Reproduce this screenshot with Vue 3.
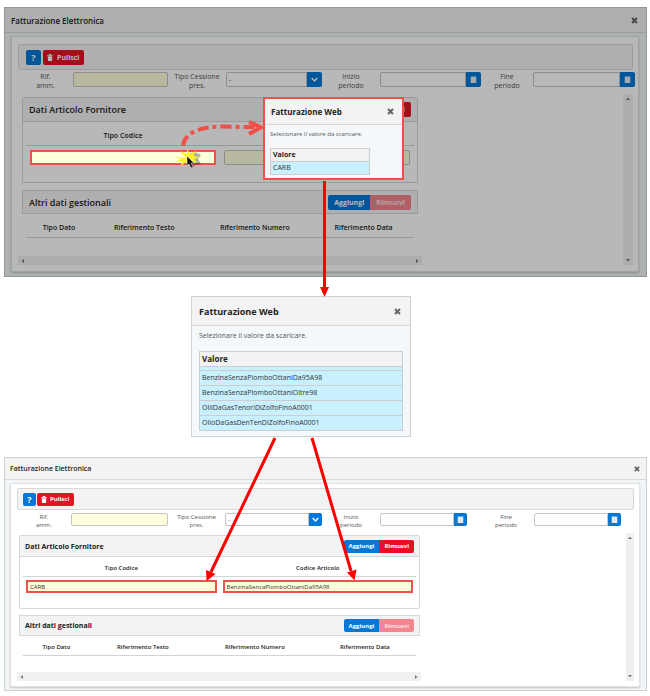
<script setup>
const windows = [
  {
    id: 'before',
    dimmed: true,
    articleColumns: ['Tipo Codice', ''],
    articleValues: ['', ''],
    articleActions: ['', 'Rimuovi'],
  },
  {
    id: 'after',
    dimmed: false,
    articleColumns: ['Tipo Codice', 'Codice Articolo'],
    articleValues: ['CARB', 'BenzinaSenzaPiomboOttaniDa95A98'],
    articleActions: ['Aggiungi', 'Rimuovi'],
  },
]
const managementColumns = ['Tipo Dato', 'Riferimento Testo', 'Riferimento Numero', 'Riferimento Data']
const values = [
  'BenzinaSenzaPiomboOttaniDa95A98',
  'BenzinaSenzaPiomboOttaniOltre98',
  'OliiDaGasTenoriDiZolfoFinoA0001',
  'OlioDaGasDenTenDiZolfoFinoA0001',
]
</script>

<template>
  <main class="page">
    <template v-for="w in windows" :key="w.id">
      <section class="window" :class="w.id">
        <header class="window-head">
          <h1>Fatturazione Elettronica</h1>
          <button class="close" aria-label="Chiudi">
            <svg viewBox="0 0 10 10"><path d="M1.5 1.5 8.5 8.5M8.5 1.5 1.5 8.5" /></svg>
          </button>
        </header>
        <div class="window-body">
          <div class="panel">
            <div class="toolbar">
              <button class="btn blue help">?</button>
              <button class="btn red clear">
                <svg viewBox="0 0 10 12"><path d="M0 1.5h3V0h4v1.5h3V3H0zM1 4h8l-.6 8H1.6z" /></svg>
                Pulisci
              </button>
            </div>
            <div class="fields">
              <label :for="w.id + '-rif'">Rif.<br />amm.</label>
              <input :id="w.id + '-rif'" class="box yellow" type="text" />
              <label :for="w.id + '-tipo'">Tipo Cessione<br />pres.</label>
              <div class="combo">
                <select :id="w.id + '-tipo'" class="box"><option>-</option></select>
                <span class="addon">
                  <svg viewBox="0 0 10 10"><path class="line" d="M1 3 5 7 9 3" /></svg>
                </span>
              </div>
              <label :for="w.id + '-inizio'">Inizio<br />periodo</label>
              <div class="combo date">
                <input :id="w.id + '-inizio'" class="box" type="text" />
                <button class="addon" aria-label="Calendario inizio">
                  <svg viewBox="0 0 10 10"><path class="cal" d="M1 1h1.5V0h1v1h3V0h1v1H9v9H1z" /></svg>
                </button>
              </div>
              <label :for="w.id + '-fine'">Fine<br />periodo</label>
              <div class="combo date">
                <input :id="w.id + '-fine'" class="box" type="text" />
                <button class="addon" aria-label="Calendario fine">
                  <svg viewBox="0 0 10 10"><path class="cal" d="M1 1h1.5V0h1v1h3V0h1v1H9v9H1z" /></svg>
                </button>
              </div>
            </div>
            <div class="scroller">
              <div class="content">
                <section class="card article">
                  <header class="card-head">
                    <h2>Dati Articolo Fornitore</h2>
                    <div class="actions">
                      <button v-if="w.articleActions[0]" class="btn blue">{{ w.articleActions[0] }}</button>
                      <button class="btn red">{{ w.articleActions[1] }}</button>
                    </div>
                  </header>
                  <table class="grid halves">
                    <thead>
                      <tr><th v-for="(c, i) in w.articleColumns" :key="i">{{ c }}</th></tr>
                    </thead>
                    <tbody>
                      <tr>
                        <td v-for="(v, i) in w.articleValues" :key="i">
                          <input
                            class="box yellow cell"
                            :class="{ marked: !w.dimmed || i === 0 }"
                            type="text"
                            :value="v"
                            :aria-label="i ? 'Codice Articolo' : 'Tipo Codice'"
                          />
                        </td>
                      </tr>
                    </tbody>
                  </table>
                </section>
                <section class="card plain">
                  <header class="card-head">
                    <h2>Altri dati gestionali</h2>
                    <div class="actions">
                      <button class="btn blue">Aggiungi</button>
                      <button class="btn red" disabled>Rimuovi</button>
                    </div>
                  </header>
                  <table class="grid management">
                    <thead>
                      <tr><th v-for="c in managementColumns" :key="c">{{ c }}</th></tr>
                    </thead>
                  </table>
                </section>
                <div class="hbar">
                  <svg viewBox="0 0 6 6"><path d="M4 1v4L1.5 3z" /></svg>
                  <svg viewBox="0 0 6 6"><path d="M2 1v4l2.500-2z" /></svg>
                </div>
              </div>
              <div class="vbar">
                <svg viewBox="0 0 6 6"><path d="M1 4h4L3 1.500z" /></svg>
                <svg viewBox="0 0 6 6"><path d="M1 2h4L3 4.500z" /></svg>
              </div>
            </div>
          </div>
        </div>

        <div v-if="w.dimmed" class="dialog small" role="dialog">
          <header class="dialog-head">
            <h2>Fatturazione Web</h2>
            <button class="close" aria-label="Chiudi">
              <svg viewBox="0 0 10 10"><path d="M1.5 1.5 8.5 8.5M8.5 1.5 1.5 8.5" /></svg>
            </button>
          </header>
          <div class="dialog-body">
            <p>Selezionare il valore da scaricare.</p>
            <table class="values">
              <thead><tr><th>Valore</th></tr></thead>
              <tbody><tr><td>CARB</td></tr></tbody>
            </table>
          </div>
        </div>
      </section>

      <section v-if="w.dimmed" class="dialog large">
        <header class="dialog-head">
          <h2>Fatturazione Web</h2>
          <button class="close" aria-label="Chiudi">
            <svg viewBox="0 0 10 10"><path d="M1.5 1.5 8.5 8.5M8.5 1.5 1.5 8.5" /></svg>
          </button>
        </header>
        <div class="dialog-body">
          <p>Selezionare il valore da scaricare.</p>
          <table class="values">
            <thead><tr><th>Valore</th></tr></thead>
            <tbody>
              <tr class="partial"><td></td></tr>
              <tr v-for="v in values" :key="v"><td>{{ v }}</td></tr>
            </tbody>
          </table>
        </div>
      </section>
    </template>

    <svg class="notes" width="650" height="696" viewBox="0 0 650 696" aria-hidden="true">
      <path class="trail" d="M183 146C185 131 203 126.500 225 126.500L260 127.500" />
      <path class="trail-head" d="M249 122 261 127.500 249 134" />
      <path class="shadow" d="M190 153l5-1 6 3-3 4 3 5-6 1-3 4-4-5z" />
      <path
        class="burst"
        d="M186 158l-6-7 7 3 0-5 3 5 6-3-3 5 6 1-5 2 3 4-6-2-2 5-3-4-5 4 1-5-7 1 6-3-6-2z"
      />
      <path class="pointer" d="M187 156v10l2-2 2 4 2-1-2-4h3z" />
      <g class="arrow">
        <path d="M324.500 181V290" />
        <path d="M275 438 211 572" />
        <path d="M312 438 351 571" />
      </g>
      <g class="arrow-head">
        <path d="M320 287h9l-4.500 10z" />
        <path d="M206.500 581 206 570 215.500 574z" />
        <path d="M354.500 580.500 347 572.500 356.500 569.500z" />
      </g>
    </svg>
  </main>
</template>

<style>
body {
  margin: 0;
  background: #fff;
}
</style>

<style scoped>
* {
  box-sizing: border-box;
}
.page {
  position: relative;
  min-height: 696px;
  padding: 7px 3px 6px 4px;
  font-family: "Open Sans", "Noto Sans", sans-serif;
  color: #333;
}
h1,
h2,
p {
  margin: 0;
}
h1,
h2,
th {
  font-weight: 600;
  color: #222;
}
button,
input,
select {
  margin: 0;
  padding: 0;
  border: 0;
  font: inherit;
  color: inherit;
}
svg {
  display: block;
}

/* Windows */
.window {
  --title: 8px;
  --text: 7px;
  --head: 25px;
  --ctl: 15px;
  position: relative;
  display: flex;
  flex-direction: column;
  border: 1px solid #cbd0d2;
  background: #f1f5f7;
}
.before::after {
  content: "";
  position: absolute;
  inset: -1px;
  background: rgba(0, 0, 0, 0.28);
}
.after {
  --title: 7px;
  --text: 6px;
  --head: 22px;
  --ctl: 13px;
}
.window-head {
  display: flex;
  align-items: center;
  justify-content: space-between;
  height: var(--head);
  padding: 0 8px 0 6px;
  border-bottom: 1px solid #d6dadb;
  background: #f3f3f3;
}
.after .window-head {
  padding: 0 6px 0 5px;
}
.window-head h1 {
  font-size: var(--title);
}
.close {
  width: 7px;
  height: 7px;
  background: none;
}
.after .close {
  width: 6px;
  height: 6px;
}
.close path {
  fill: none;
  stroke: #666;
  stroke-width: 3;
}
.window-body {
  padding: 3px 7px 4px 6px;
}
.panel {
  padding: 7px 5px 6px 6px;
  border: 1px solid #e0e4e6;
  border-radius: 2px;
  background: #fff;
  box-shadow: 0 1px 2px rgba(0, 0, 0, 0.2);
}
.after .window-body {
  padding: 3px 6px 3px 5px;
}
.after .panel {
  padding: 4px 5px 5px 6px;
}
.toolbar {
  display: flex;
  align-items: center;
  gap: 2px;
  height: 26px;
  padding: 0 7px;
  border: 1px solid #d8d8d8;
  border-radius: 2px;
  background: #f3f3f3;
}
.after .toolbar {
  height: 22px;
  padding: 0 5px;
  gap: 1px;
}
.btn {
  display: flex;
  align-items: center;
  justify-content: center;
  gap: 4px;
  height: var(--ctl);
  padding: 0 6px;
  font-size: var(--text);
  font-weight: 700;
  color: #fff;
}
.after .btn {
  gap: 3px;
  padding: 0 5px;
}
.blue {
  background: #0078d7;
}
.red {
  background: #e81123;
}
.btn:disabled {
  background: #f3858f;
  color: #fbdfe1;
}
.toolbar .btn {
  border-radius: 2px;
}
.toolbar .help {
  width: var(--ctl);
  padding: 0;
  font-size: 9px;
}
.clear svg {
  width: 6px;
  height: 7px;
  fill: #fff;
}
.toolbar .clear {
  padding: 0 5px 0 4px;
}

/* Fields */
.fields {
  display: grid;
  grid-template-columns: 55fr 95fr 58fr 96fr 58fr 101fr 52fr 102fr;
  align-items: start;
  height: 24px;
  margin-right: -2px;
  padding-top: 2px;
}
.after .fields {
  grid-template-columns: 54fr 97fr 57fr 97fr 58fr 98fr 56fr 100fr;
  height: 23px;
  margin-right: 0;
  padding-top: 3px;
}
.fields label {
  font-size: var(--text);
  line-height: 9px;
  text-align: center;
  color: #555;
}
.after .fields label {
  line-height: 8px;
}
.box {
  width: 100%;
  min-width: 0;
  height: var(--ctl);
  padding: 0 2px;
  border: 1px solid #c4c4c4;
  border-radius: 2px;
  background: #fff;
  font-size: var(--text);
  appearance: none;
}
.yellow {
  background: #ffffde;
}
.combo {
  display: flex;
}
.after .date {
  max-width: 87px;
}
.combo .box {
  flex: 1;
  border-radius: 2px 0 0 2px;
}
.addon {
  display: flex;
  align-items: center;
  justify-content: center;
  width: var(--ctl);
  height: var(--ctl);
  border-radius: 0 2px 2px 0;
  background: #0078d7;
}
.addon svg {
  width: 7px;
  height: 7px;
}
.line {
  fill: none;
  stroke: #fff;
  stroke-width: 2;
}
.cal {
  fill: #dfeaf5;
}

/* Scrollable content */
.scroller {
  display: flex;
  justify-content: space-between;
}
.content {
  display: flex;
  flex-direction: column;
  width: 66%;
  padding-top: 3px;
}
.card {
  width: 396px;
  margin: 0 0 7px 4px;
  border: 1px solid #d4d8da;
  border-radius: 2px;
}
.before .article {
  min-height: 86px;
}
.before .plain {
  min-height: 59px;
}
.after .card {
  width: 401px;
  margin: 0 0 6px 2px;
}
.after .content {
  padding-top: 2px;
}
.after .article {
  min-height: 74px;
}
.after .plain {
  min-height: 51px;
}
.card.plain,
.after .card.plain {
  border-color: transparent;
}
.card-head {
  display: flex;
  align-items: center;
  justify-content: space-between;
  height: 24px;
  padding: 0 6px;
  border-bottom: 1px solid #d4d8da;
  background: #f3f3f3;
}
.plain .card-head {
  margin: -1px -1px 0;
  border: 1px solid #d4d8da;
}
.after .card-head {
  height: 21px;
  padding: 0 5px;
}
.card-head h2 {
  font-size: 9px;
}
.after .card-head h2 {
  font-size: 7px;
  font-weight: 700;
}
.actions {
  display: flex;
}
.actions .btn:first-child {
  border-radius: 2px 0 0 2px;
}
.actions .btn:last-child {
  border-radius: 0 2px 2px 0;
}
.grid {
  width: 100%;
  padding: 0 3px;
  border-spacing: 0;
  table-layout: fixed;
}
.grid th {
  height: 24px;
  padding: 3px 0 0;
  border-bottom: 1px solid #d0d4d6;
  font-size: var(--text);
}
.after .grid th {
  height: 20px;
}
.management th:nth-child(1) {
  width: 17%;
}
.management th:nth-child(2) {
  width: 27%;
}
.management th:nth-child(3) {
  width: 30%;
}
.grid td {
  padding: 4px 4px 0;
}
.after .grid td {
  padding: 3px 3px 0;
}
.cell {
  display: block;
}
.marked {
  position: relative;
  z-index: 1;
  border: 2px solid #f0504a;
  border-radius: 0;
}
.hbar,
.vbar {
  display: flex;
  justify-content: space-between;
  background: #f0f0f0;
}
.hbar {
  align-items: center;
  width: 404px;
  height: 9px;
  padding: 0 2px;
  margin-top: auto;
}
.vbar {
  flex-direction: column;
  align-items: center;
  width: 10px;
  padding: 2px 0;
}
.after .vbar {
  width: 8px;
}
.hbar svg,
.vbar svg {
  width: 6px;
  height: 6px;
  fill: #777;
}

/* Value pickers */
.dialog {
  border: 1px solid #cfd2d3;
  background: #f4f8fa;
}
.small {
  position: absolute;
  z-index: 2;
  top: 89px;
  left: 258px;
  width: 141px;
  border: 2px solid #f0504a;
}
.large {
  width: 220px;
  margin: 19px 0 20px 187px;
}
.dialog-head {
  display: flex;
  align-items: center;
  justify-content: space-between;
  height: 29px;
  padding: 0 9px 0 7px;
  border-bottom: 1px solid #d4d8da;
  background: #f3f3f3;
}
.dialog-head h2 {
  font-size: 9px;
  font-weight: 700;
}
.dialog-body {
  padding: 5px 7px;
}
.dialog p {
  margin-bottom: 10px;
  font-size: 7px;
  line-height: 10px;
  color: #555;
}
.values {
  width: 100%;
  border-collapse: collapse;
  text-align: left;
}
.values th,
.values td {
  height: 15px;
  padding: 0 2px;
  border: 1px solid #cdcdcd;
  font-size: 7px;
  line-height: 10px;
}
.values th {
  background: #f3f3f3;
  font-size: 8px;
  font-weight: 700;
}
.values td {
  background: #c8f0ff;
}
.values .partial td {
  height: 4px;
}
.small .dialog-head {
  height: 26px;
  padding: 0 8px 0 6px;
}
.small .dialog-head h2 {
  font-size: 8px;
}
.small .dialog-body {
  padding: 4px 5px 3px;
}
.small p {
  margin-bottom: 9px;
  font-size: 6px;
}
.small .values {
  width: 100px;
}
.small .values th,
.small .values td {
  height: 13px;
  font-size: 7px;
}

/* Annotations */
.notes {
  position: absolute;
  z-index: 3;
  top: 0;
  left: 0;
  pointer-events: none;
}
.trail {
  fill: none;
  stroke: #f0504a;
  stroke-width: 4;
  stroke-dasharray: 11 4 4 4;
}
.trail-head {
  fill: none;
  stroke: #f0504a;
  stroke-width: 4;
}
.shadow {
  fill: rgba(0, 0, 0, 0.3);
}
.burst {
  fill: #fff22d;
}
.pointer {
  fill: #111;
  stroke: #fff;
  stroke-width: 0.5;
}
.arrow {
  fill: none;
  stroke: #f00;
  stroke-width: 3;
}
.arrow-head {
  fill: #f00;
}
</style>
